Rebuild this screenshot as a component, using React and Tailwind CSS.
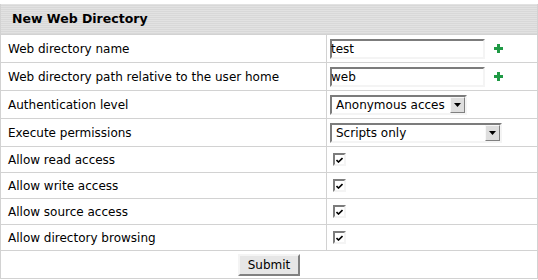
import React from "react";

function Plus() {
  return (
    <svg width="9" height="9" viewBox="0 0 9 9" className="ml-[9px]">
      <rect x="3" y="0" width="3" height="9" fill="#1f9a45" />
      <rect x="0" y="3" width="9" height="3" fill="#1f9a45" />
    </svg>
  );
}

function TextBox({ value }) {
  return (
    <div className="flex h-[20px] w-[155px] items-center border-2 border-t-[#7c7c7c] border-l-[#7c7c7c] border-b-[#f4f4f4] border-r-[#f4f4f4] bg-white leading-none">
      <span className="-ml-[1px]">{value}</span>
    </div>
  );
}

function SelectBox({ value, width }) {
  return (
    <div
      className={`flex h-[20px] items-center justify-between overflow-hidden whitespace-nowrap border-2 border-t-[#7c7c7c] border-l-[#7c7c7c] border-b-[#f4f4f4] border-r-[#f4f4f4] bg-white pl-[4px] leading-none ${width}`}
    >
      <span>{value}</span>
      <div className="flex h-[16px] w-[15px] shrink-0 items-center justify-center border border-t-[#f8f8f8] border-l-[#f8f8f8] border-b-[#808080] border-r-[#808080] bg-[#dedede]">
        <svg width="7" height="4" viewBox="0 0 7 4">
          <polygon points="0,0 7,0 3.5,4" fill="#000" />
        </svg>
      </div>
    </div>
  );
}

function Check() {
  return (
    <div className="ml-[3px] flex h-[13px] w-[13px] items-center justify-center border-2 border-t-[#7c7c7c] border-l-[#7c7c7c] border-b-[#f4f4f4] border-r-[#f4f4f4] bg-white">
      <svg width="7" height="6" viewBox="0 0 7 6">
        <path d="M0.5 3 L2.5 5 L6.5 1" stroke="#000" strokeWidth="1.6" fill="none" />
      </svg>
    </div>
  );
}

function Row({ label, children, tall }) {
  return (
    <div className={`flex border-t border-[#d2d2d2] ${tall ? "h-[28px]" : "h-[26px]"}`}>
      <div className="flex w-[326px] items-center border-r border-[#d2d2d2] pl-[7px]">{label}</div>
      <div className="flex flex-1 items-center pl-[3px]">{children}</div>
    </div>
  );
}

export default function App() {
  return (
    <div className="h-[280px] w-[538px] bg-white pt-[4px] font-['DejaVu_Sans',Verdana,sans-serif] text-[12px] text-black">
      <div className="border-x border-b border-[#d2d2d2]">
        <div className="flex h-[30px] items-center bg-[repeating-linear-gradient(to_bottom,#e2e2e2_0px,#e2e2e2_1px,#d8d8d8_1px,#d8d8d8_2px)] pl-[11px] text-[12.5px] font-bold">
          New Web Directory
        </div>
        <Row label="Web directory name" tall>
          <TextBox value="test" />
          <Plus />
        </Row>
        <Row label="Web directory path relative to the user home" tall>
          <TextBox value="web" />
          <Plus />
        </Row>
        <Row label="Authentication level" tall>
          <SelectBox value="Anonymous acces" width="w-[137px]" />
        </Row>
        <Row label="Execute permissions" tall>
          <SelectBox value="Scripts only" width="w-[172px]" />
        </Row>
        <Row label="Allow read access">
          <Check />
        </Row>
        <Row label="Allow write access">
          <Check />
        </Row>
        <Row label="Allow source access">
          <Check />
        </Row>
        <Row label="Allow directory browsing">
          <Check />
        </Row>
        <div className="flex h-[28px] items-center justify-center border-t border-[#d2d2d2]">
          <button className="h-[22px] w-[62px] border-2 border-t-[#f4f4f4] border-l-[#f4f4f4] border-b-[#808080] border-r-[#808080] bg-[#e6e6e6] leading-none">
            Submit
          </button>
        </div>
      </div>
    </div>
  );
}
